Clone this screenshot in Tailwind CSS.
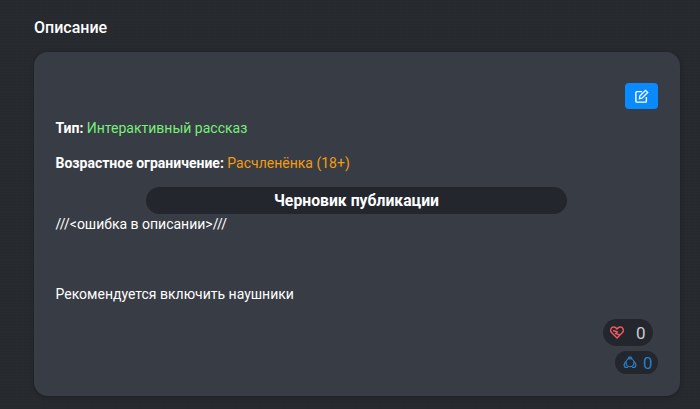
<!DOCTYPE html>
<html lang="ru">
<head>
<meta charset="utf-8">
<script src="https://cdn.jsdelivr.net/npm/@tailwindcss/browser@4"></script>
</head>
<body class="m-0 h-[409px] w-[700px] overflow-hidden bg-[#272a2f] bg-[linear-gradient(rgba(0,0,0,0.03)_1px,transparent_1px),linear-gradient(90deg,rgba(0,0,0,0.03)_1px,transparent_1px)] bg-[size:3px_3px] font-['Roboto',sans-serif] text-white">
<div class="px-[34px] pt-[18px]">
  <h2 class="m-0 h-[34px] text-[16px] leading-[19px] font-medium text-white">Описание</h2>
  <div class="flex h-[344px] w-[646px] flex-col rounded-[14px] bg-[#383c44] pr-[22px] pl-[21.5px] pt-[31px] text-[14px] leading-[20px] shadow-[0_1px_4px_rgba(0,0,0,0.25)]">
    <div class="flex justify-end">
      <button class="flex h-[26px] w-[33px] items-center justify-center rounded-[4px] bg-[#0a8aff]">
        <svg width="14" height="14" viewBox="0 0 16 16" fill="none" stroke="white" stroke-width="1.6">
          <path d="M13 9v5a1 1 0 0 1-1 1H2a1 1 0 0 1-1-1V4a1 1 0 0 1 1-1h6"/>
          <path d="M5.500 8 12 1.500l2.500 2.500L8 10.500l-3 .5z" stroke-width="1.500"/>
        </svg>
      </button>
    </div>
    <p class="m-0 mt-[9px] h-[20px]"><b class="font-bold">Тип:</b> <span class="text-[#79ee7b]">Интерактивный рассказ</span></p>
    <p class="m-0 mt-[14.500px] h-[20px]"><b class="font-bold">Возрастное ограничение:</b> <span class="text-[#f39c12]">Расчленёнка (18+)</span></p>
    <div class="mx-auto mt-[14.500px] ml-[90.5px] flex h-[27px] w-[421px] items-center justify-center rounded-full bg-[#24262e] text-[15.750px] font-bold">Черновик публикации</div>
    <p class="m-0 mt-[0px] h-[20px]">///&lt;ошибка в описании&gt;///</p>
    <p class="m-0 mt-[50px] h-[20px]">Рекомендуется включить наушники</p>
    <div class="mt-[15px] flex flex-col items-end gap-[5px]">
      <div class="mr-[5px] flex h-[27px] w-[50px] items-center rounded-full bg-[#24262e] pl-[7px] text-[17px] text-[#c9ccd1]">
        <svg width="14" height="13" viewBox="0 0 14 13" fill="none" stroke="#f15b5b" stroke-width="1.400" stroke-linejoin="round">
          <path d="M7 12 1.300 6.300C-.2 4.300 1 1 3.700 1 5.200 1 6.200 1.800 7 3c.8-1.200 1.800-2 3.300-2C13 1 14.200 4.300 12.700 6.300z"/>
          <path d="M3 4.500 7.500 6 5.500 7.500l4.500 1.500"/>
        </svg>
        <span class="ml-[12px]">0</span>
      </div>
      <div class="flex h-[23px] w-[43px] items-center rounded-full bg-[#24262e] pl-[8px] text-[17px] text-[#2a7dc4]">
        <svg width="14" height="13" viewBox="0 0 14 13" fill="none" stroke="#2a7dc4" stroke-width="1.300" stroke-linejoin="round">
          <circle cx="7" cy="6.700" r="4"/>
          <path d="M5 2.800 6 1.200h2l1 1.600"/>
          <path d="M2.700 5.500 1 9l1 2.300h3"/>
          <path d="M11.300 5.500 13 9l-1 2.300H9"/>
        </svg>
        <span class="ml-[6px]">0</span>
      </div>
    </div>
  </div>
</div>
</body>
</html>
